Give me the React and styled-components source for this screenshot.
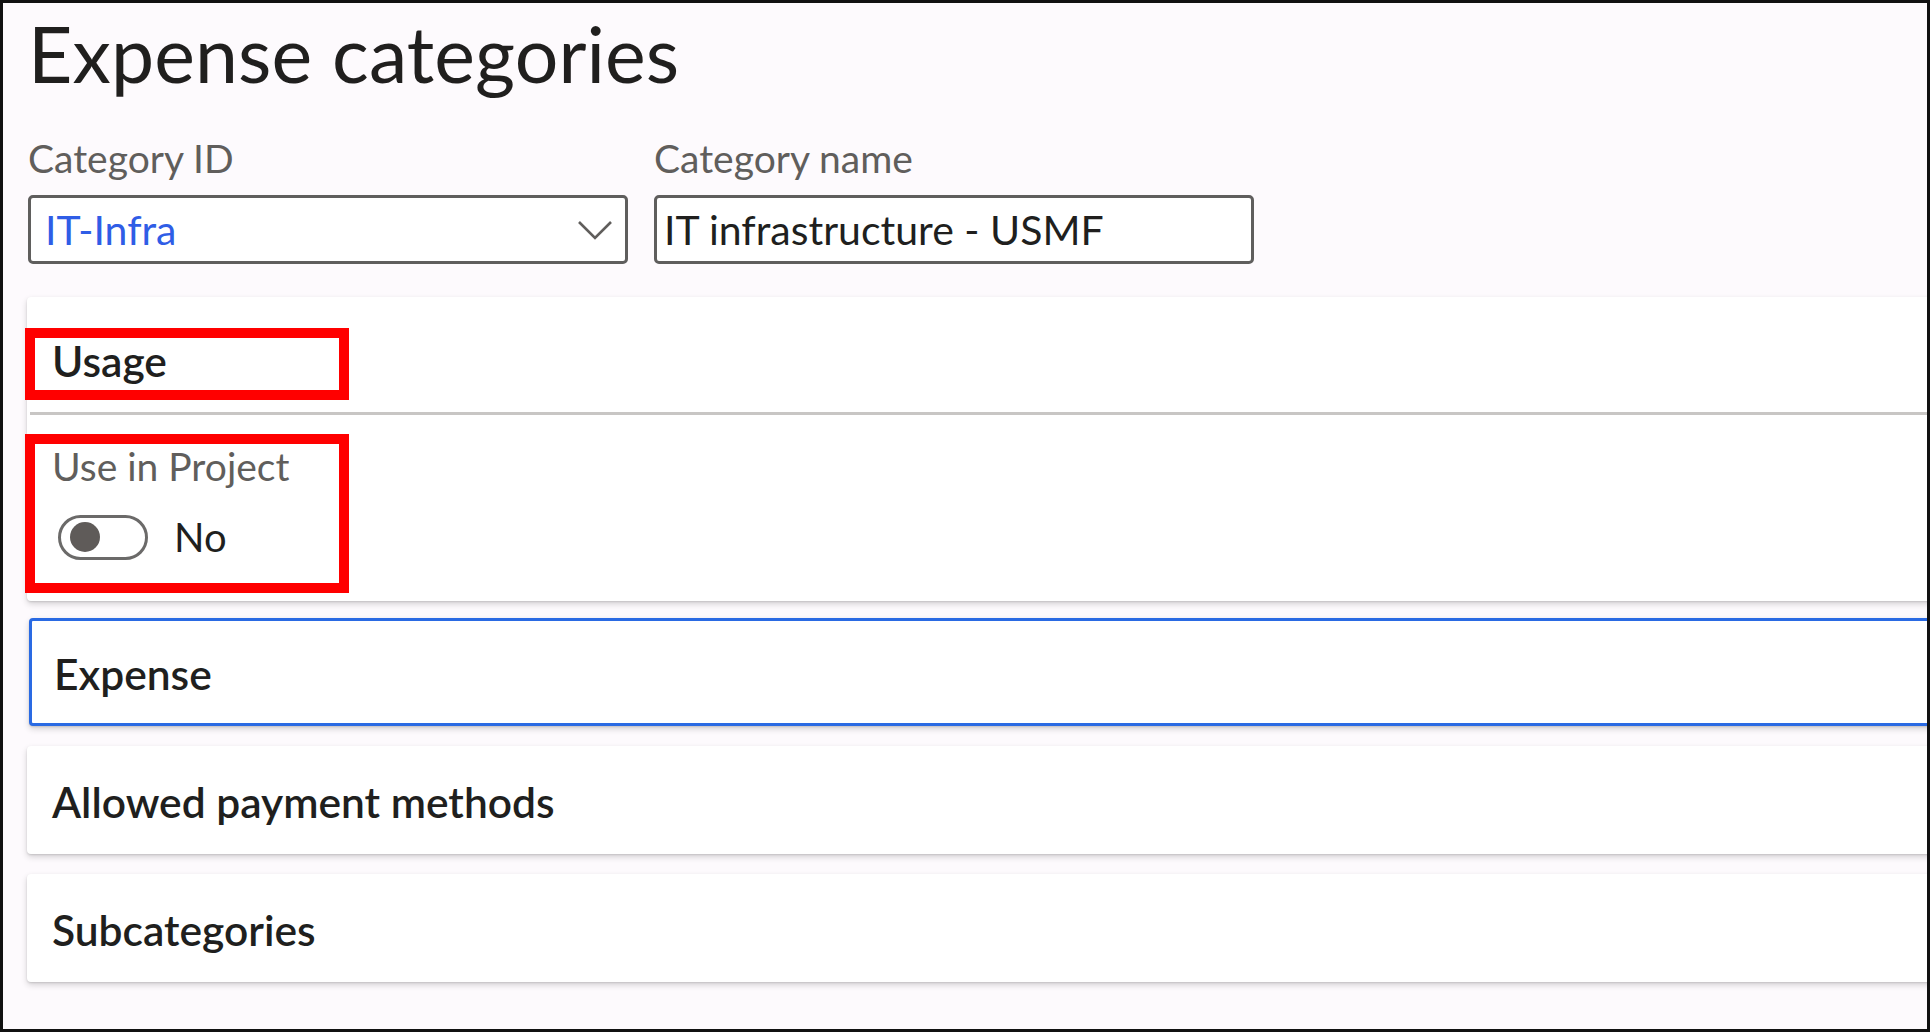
import React from 'react';
import styled, { createGlobalStyle } from 'styled-components';

const GlobalStyle = createGlobalStyle`
  html, body {
    margin: 0;
    padding: 0;
    background: #ffffff;
  }
  * {
    box-sizing: border-box;
  }
`;

const Frame = styled.div`
  width: 1930px;
  height: 1032px;
  border: 3px solid #111;
  background: #fdfafd;
  overflow: hidden;
  font-family: 'Segoe UI', Lato, 'Open Sans', sans-serif;
  color: #201f1e;
`;

const Header = styled.div`
  padding: 3px 0 0 25px;
`;

const Title = styled.h1`
  margin: 0;
  font-size: 77px;
  font-weight: 400;
  line-height: 94px;
  letter-spacing: 0.1px;
`;

const FieldRow = styled.div`
  display: flex;
  gap: 26px;
  margin-top: 35px;
`;

const Field = styled.div`
  display: flex;
  flex-direction: column;
  width: 600px;
`;

const Label = styled.div`
  font-size: 39px;
  line-height: 46px;
  color: #605e5c;
  margin-bottom: ${(p) => (p.$tight ? '0' : '14px')};
`;

const Box = styled.div`
  height: 69px;
  border: 3px solid #5f5e5d;
  border-radius: 5px;
  background: #fff;
  display: flex;
  align-items: center;
  justify-content: space-between;
  padding: 0 12px 0 ${(p) => (p.$link ? '14px' : '7px')};
  font-size: 41px;
  color: ${(p) => (p.$link ? '#2f5de6' : '#201f1e')};
`;

const Chevron = () => (
  <svg width="36" height="22" viewBox="0 0 36 22" fill="none">
    <path d="M2 3 L18 19 L34 3" stroke="#605e5c" strokeWidth="2.6" />
  </svg>
);

const Cards = styled.div`
  display: flex;
  flex-direction: column;
  gap: 20px;
  margin-top: 33px;
  margin-left: 24px;
  margin-right: -20px;
`;

const Card = styled.div`
  position: relative;
  background: #fff;
  border-radius: 4px;
  box-shadow: 0 3px 6px rgba(0, 0, 0, 0.16), 0 1px 2px rgba(0, 0, 0, 0.12);
  border: ${(p) => (p.$focused ? '3px solid #2a6ae3' : '3px solid transparent')};
  margin-left: ${(p) => (p.$focused ? '2px' : '0')};
  margin-top: ${(p) => (p.$focused ? '-3px' : '0')};
`;

const CardHeader = styled.div`
  height: ${(p) => (p.$divided ? '115px' : '102px')};
  display: flex;
  align-items: center;
  padding-left: 22px;
  padding-top: ${(p) => (p.$divided ? '8px' : '2px')};
  font-size: 42.5px;
  font-weight: 600;
  color: #201f1e;
  border-bottom: ${(p) => (p.$divided ? '3px solid #c8c6c4' : 'none')};
`;

const CardBody = styled.div`
  padding: 28px 0 0 22px;
  height: 183px;
`;

const ToggleRow = styled.div`
  display: flex;
  align-items: center;
  gap: 26px;
  margin-top: 24px;
  padding-left: 6px;
`;

const Track = styled.div`
  width: 90px;
  height: 45px;
  border: 3px solid #6b6a69;
  border-radius: 23px;
  display: flex;
  align-items: center;
  padding-left: 9px;
`;

const Thumb = styled.div`
  width: 30px;
  height: 30px;
  border-radius: 50%;
  background: #5f5b59;
`;

const ToggleText = styled.span`
  font-size: 40px;
  color: #201f1e;
`;

const Highlight = styled.div`
  position: absolute;
  left: -5px;
  width: 324px;
  border: 10px solid #ff0000;
  top: ${(p) => p.$top}px;
  height: ${(p) => p.$h}px;
  pointer-events: none;
`;

export default function App() {
  return (
    <>
      <GlobalStyle />
      <Frame>
        <Header>
          <Title>Expense categories</Title>
          <FieldRow>
            <Field>
              <Label>Category ID</Label>
              <Box $link>
                <span>IT-Infra</span>
                <Chevron />
              </Box>
            </Field>
            <Field>
              <Label>Category name</Label>
              <Box>
                <span>IT infrastructure - USMF</span>
              </Box>
            </Field>
          </FieldRow>
        </Header>
        <Cards>
          <Card>
            <CardHeader $divided>Usage</CardHeader>
            <CardBody>
              <Label $tight>Use in Project</Label>
              <ToggleRow>
                <Track>
                  <Thumb />
                </Track>
                <ToggleText>No</ToggleText>
              </ToggleRow>
            </CardBody>
            <Highlight $top={28} $h={72} />
            <Highlight $top={134} $h={159} />
          </Card>
          <Card $focused>
            <CardHeader>Expense</CardHeader>
          </Card>
          <Card>
            <CardHeader>Allowed payment methods</CardHeader>
          </Card>
          <Card>
            <CardHeader>Subcategories</CardHeader>
          </Card>
        </Cards>
      </Frame>
    </>
  );
}
